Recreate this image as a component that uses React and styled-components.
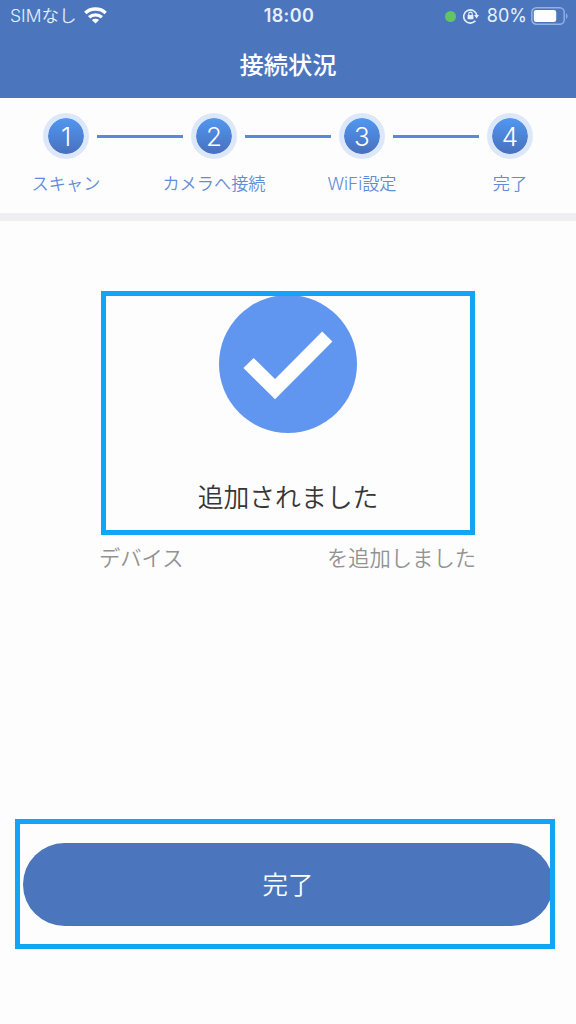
import React from "react";
import styled, { createGlobalStyle } from "styled-components";

const GlobalStyle = createGlobalStyle`
  * {
    box-sizing: border-box;
  }
  body {
    margin: 0;
    background: #fdfdfd;
    font-family: Inter, "Noto Sans CJK JP", sans-serif;
  }
`;

const Screen = styled.div`
  width: 576px;
  height: 1024px;
  overflow: hidden;
  display: flex;
  flex-direction: column;
  background: #fdfdfd;
`;

const Header = styled.header`
  height: 98px;
  flex-shrink: 0;
  background: #4b76bd;
  color: #fff;
`;

const StatusBar = styled.div`
  height: 32px;
  display: grid;
  grid-template-columns: 1fr auto 1fr;
  align-items: center;
  padding: 0 8px 0 10px;
  font-size: 18px;
  line-height: 32px;
  color: #e6f0ff;
`;

const StatusGroup = styled.div`
  display: flex;
  align-items: center;
  justify-content: ${({ $end }) => ($end ? "flex-end" : "flex-start")};
`;

const Carrier = styled.span`
  font-size: 17.5px;
  font-weight: 350;
  margin-right: 8px;
`;

const Clock = styled.span`
  font-size: 18px;
  font-weight: 600;
  letter-spacing: 0.4px;
`;

const CameraDot = styled.span`
  width: 11px;
  height: 11px;
  margin-right: 7px;
  border-radius: 50%;
  background: #62c466;
`;

const BatteryText = styled.span`
  font-size: 18px;
  margin: 0 4px 0 8px;
`;

const PageTitle = styled.h1`
  margin: 0;
  padding-top: 15px;
  font-size: 24.3px;
  line-height: 36px;
  font-weight: 500;
  text-align: center;
`;

const Progress = styled.section`
  height: 123px;
  flex-shrink: 0;
  padding-top: 15px;
  border-bottom: 8px solid #efeff2;
`;

const Rail = styled.div`
  display: flex;
  align-items: center;
  padding: 0 43px;
`;

const StepBadge = styled.div`
  width: 46px;
  height: 46px;
  flex-shrink: 0;
  display: flex;
  align-items: center;
  justify-content: center;
  padding-top: 1px;
  border: 5px solid #dce8f9;
  border-radius: 50%;
  background: linear-gradient(#5197f1, #4870bd) padding-box;
  color: #fff;
  font-size: 26px;
  font-weight: 350;
  line-height: 36px;
`;

const RailLine = styled.div`
  flex: 1;
  height: 3px;
  margin: 0 8px;
  background: #5b88d8;
`;

const Labels = styled.div`
  display: grid;
  grid-template-columns: repeat(4, 148px);
  justify-content: center;
  margin-top: 12px;
`;

const StepLabel = styled.span`
  font-size: 17.2px;
  line-height: 26px;
  font-weight: 350;
  text-align: center;
  color: #628cd9;
`;

const Main = styled.main`
  flex: 1;
  display: flex;
  flex-direction: column;
  padding: 70px 21px 0 15px;
`;

const Highlight = styled.div`
  border: 5px solid #12a4f5;
  overflow: hidden;
`;

const Result = styled(Highlight)`
  width: 374px;
  height: 244px;
  margin-left: 86px;
  display: flex;
  flex-direction: column;
  align-items: center;
`;

const CheckIcon = styled.svg`
  width: 138px;
  height: 138px;
  flex-shrink: 0;
  margin-top: -1px;
`;

const ResultTitle = styled.h2`
  margin: 45px 0 0;
  font-size: 25.8px;
  line-height: 40px;
  font-weight: 350;
  color: #363636;
`;

const Detail = styled.p`
  width: 377px;
  display: flex;
  justify-content: space-between;
  margin: 7px 0 0 84px;
  font-size: 21.3px;
  line-height: 32px;
  font-weight: 350;
  color: #929292;
`;

const Footer = styled(Highlight)`
  height: 130px;
  margin-top: 245px;
  padding: 19px 0 0 3px;
`;

const DoneButton = styled.button`
  display: block;
  width: 530px;
  height: 83px;
  padding: 0 0 4px;
  border: none;
  border-radius: 42px;
  background: #4b76bd;
  color: #fff;
  font-family: inherit;
  font-size: 25.5px;
  font-weight: 350;
`;

const steps = ["スキャン", "カメラへ接続", "WiFi設定", "完了"];

const WifiIcon = () => (
  <svg width="23" height="18" viewBox="0 0 23 18" fill="none" stroke="#fff">
    <path d="M1.3 6C7 .8 16 .8 21.7 6" strokeWidth="3.5" />
    <path d="M5.1 10.3C8.6 7.1 14.4 7.1 17.9 10.3" strokeWidth="3.3" />
    <path d="M11.5 16.6L7.9 13.1C9.9 11.4 13.1 11.4 15.1 13.1Z" fill="#fff" stroke="none" />
  </svg>
);

const RotationLockIcon = () => (
  <svg width="16" height="16" viewBox="0 0 16 16" fill="none" stroke="#e6f0ff">
    <path d="M12.4 12.7A6.6 6.6 0 1 1 13.8 7.2" strokeWidth="1.6" />
    <path d="M11.1 7.1H16L13.6 10.4Z" fill="#e6f0ff" stroke="none" />
    <rect x="4.6" y="7" width="5.8" height="4.3" rx=".6" fill="#e6f0ff" stroke="none" />
    <path d="M5.8 7.2V5.8a1.7 1.7 0 0 1 3.4 0V7.2" strokeWidth="1.1" />
  </svg>
);

const BatteryIcon = () => (
  <svg width="37" height="18" viewBox="0 0 37 18">
    <rect x=".8" y=".8" width="32.4" height="16.4" rx="4.5" fill="none" stroke="#91b0e4" strokeWidth="1.5" />
    <rect x="2.8" y="2.9" width="22.4" height="12.2" rx="2.4" fill="#fff" />
    <path d="M35 6.2c2 .9 2 4.7 0 5.6z" fill="#91b0e4" />
  </svg>
);

const App = () => {
  return (
    <Screen>
      <GlobalStyle />
      <Header>
        <StatusBar>
          <StatusGroup>
            <Carrier>SIMなし</Carrier>
            <WifiIcon />
          </StatusGroup>
          <Clock>18:00</Clock>
          <StatusGroup $end>
            <CameraDot />
            <RotationLockIcon />
            <BatteryText>80%</BatteryText>
            <BatteryIcon />
          </StatusGroup>
        </StatusBar>
        <PageTitle>接続状況</PageTitle>
      </Header>

      <Progress>
        <Rail>
          {steps.map((step, index) => (
            <React.Fragment key={step}>
              {index > 0 && <RailLine />}
              <StepBadge>{index + 1}</StepBadge>
            </React.Fragment>
          ))}
        </Rail>
        <Labels>
          {steps.map((step) => (
            <StepLabel key={step}>{step}</StepLabel>
          ))}
        </Labels>
      </Progress>

      <Main>
        <Result>
          <CheckIcon viewBox="0 0 138 138">
            <circle cx="69" cy="69" r="69" fill="#6096ef" />
            <path d="M29.5 68L56 94.2L108.3 41.5" fill="none" stroke="#fff" strokeWidth="14.4" />
          </CheckIcon>
          <ResultTitle>追加されました</ResultTitle>
        </Result>
        <Detail>
          <span>デバイス</span>
          <span>を追加しました</span>
        </Detail>
        <Footer>
          <DoneButton>完了</DoneButton>
        </Footer>
      </Main>
    </Screen>
  );
};

export default App;
